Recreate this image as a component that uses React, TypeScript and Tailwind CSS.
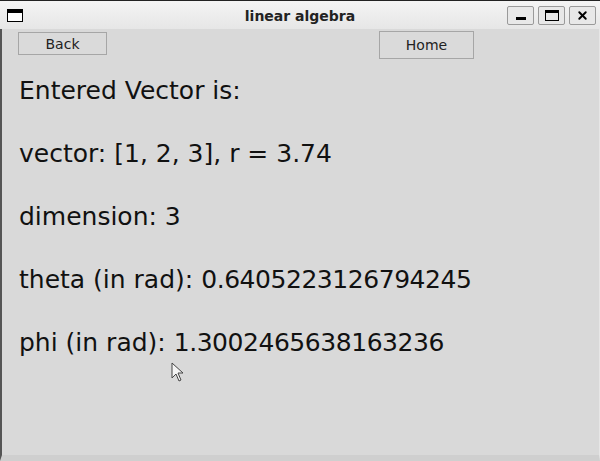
import { X } from 'lucide-react';

const lines = [
  { label: 'Entered Vector is:', num: '' },
  { label: 'vector: [1, 2, 3], r = 3.74', num: '' },
  { label: 'dimension: 3', num: '' },
  { label: 'theta (in rad): ', num: '0.6405223126794245' },
  { label: 'phi (in rad): ', num: '1.3002465638163236' },
];

const App = () => {
  return (
    <div className="relative w-[600px] h-[461px] overflow-hidden bg-[#d9d9d9] font-['DejaVu_Sans',sans-serif] text-black">
      {/* Title bar */}
      <div className="h-[29px] flex items-center border-t border-[#222] bg-gradient-to-b from-[#f4f4f4] to-[#e6e6e6] relative">
        <div className="ml-[7px] w-[16px] h-[13px] border border-black border-t-[4px] bg-white" />
        <div className="absolute inset-x-0 top-[5px] text-center text-[14px] font-bold text-[#222]">linear algebra</div>
        <div className="ml-auto mr-[4px] flex gap-[4px]">
          <div className="w-[27px] h-[19px] border border-[#9a9a9a] rounded-[2px] bg-[#e8e8e8] flex items-end justify-center pb-[4px]">
            <div className="w-[10px] h-[3px] bg-black" />
          </div>
          <div className="w-[27px] h-[19px] border border-[#9a9a9a] rounded-[2px] bg-[#e8e8e8] flex items-center justify-center">
            <div className="w-[14px] h-[11px] border border-black border-t-[3px]" />
          </div>
          <div className="w-[27px] h-[19px] border border-[#9a9a9a] rounded-[2px] bg-[#e8e8e8] flex items-center justify-center">
            <X size={13} strokeWidth={3.5} className="text-black" />
          </div>
        </div>
      </div>

      {/* Window body */}
      <div className="h-[432px] border-l-2 border-[#555] border-b-[6px] border-b-[#cfcfcf] border-r border-r-[#e6e6e6] relative">
        <div className="flex items-start pt-[2px]">
          <button className="ml-[16px] mt-[1px] w-[89px] h-[23px] border border-[#a6a6a6] bg-[#dadada] text-[14px] text-[#222] leading-none">
            Back
          </button>
          <button className="ml-[272px] w-[95px] h-[28px] border border-[#a6a6a6] bg-[#dadada] text-[14px] text-[#222] leading-none">
            Home
          </button>
        </div>
        <div className="ml-[17px] mt-[16px] flex flex-col gap-[31px]">
          {lines.map((l) => (
            <div key={l.label} className="text-[25px] leading-[32px] text-[#111] whitespace-pre">
              {l.label}
              {l.num && <span className="tracking-[-0.45px]">{l.num}</span>}
            </div>
          ))}
        </div>
      </div>

      {/* Mouse cursor */}
      <svg className="absolute left-[171px] top-[362px]" width="16" height="22" viewBox="0 0 16 22">
        <path d="M1 1 L1 16 L5 12 L8 19 L10 18 L7 11 L12 11 Z" fill="#f4f4f4" stroke="#444" strokeWidth="1" />
      </svg>
    </div>
  );
};

export default App;
